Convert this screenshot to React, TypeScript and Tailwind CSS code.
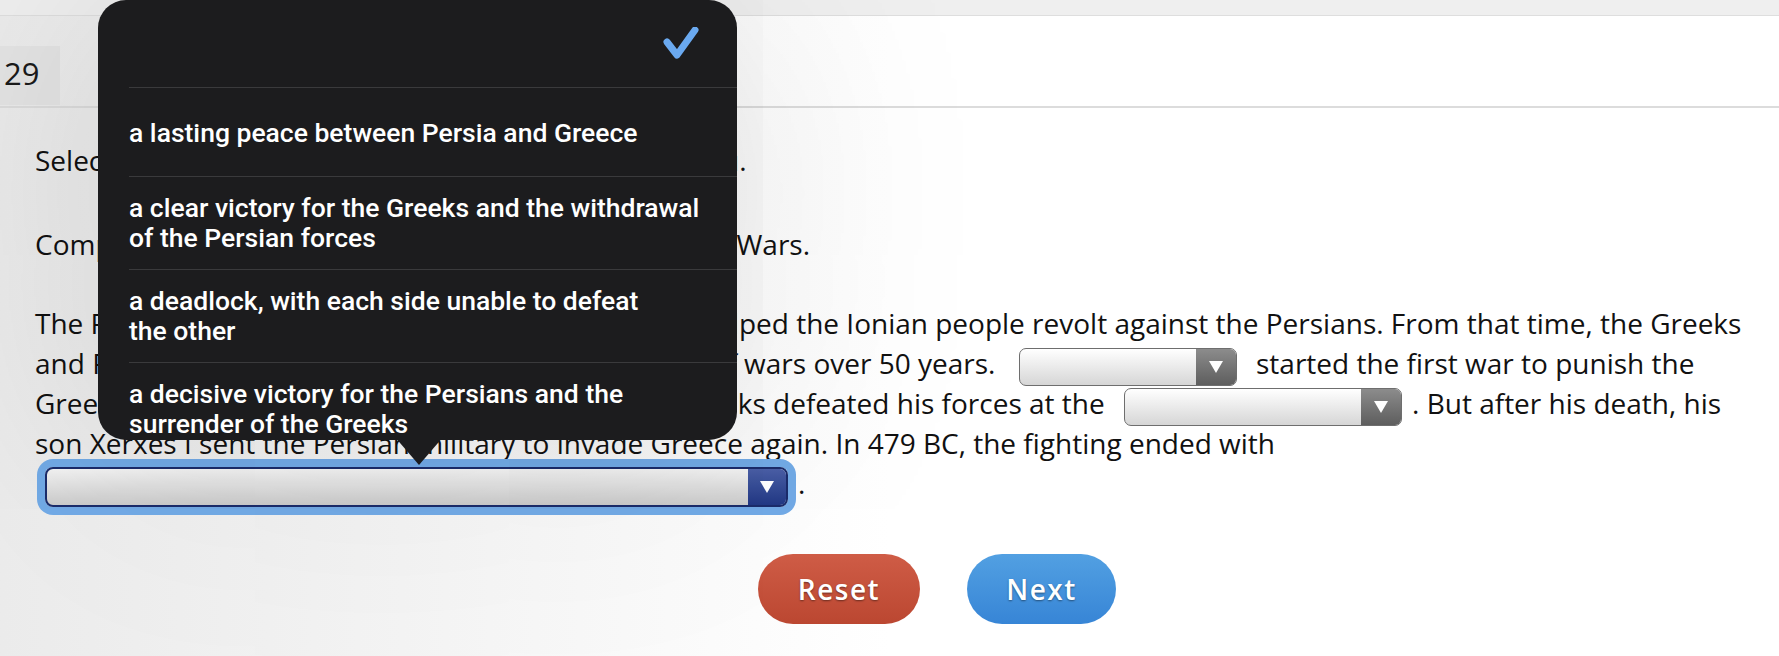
import React from "react";

const Caret = () => (
  <svg width="14" height="12" viewBox="0 0 14 12">
    <polygon points="0,0 14,0 7,12" fill="#ffffff" />
  </svg>
);

const Select = ({ width, focused }: { width: number; focused?: boolean }) => {
  if (focused) {
    return (
      <span
        className="inline-flex h-[40px] align-middle rounded-[8px] border-2 border-[#1b2c6b] bg-gradient-to-b from-[#f4f4f4] to-[#cdcdcd] shadow-[0_0_0_8px_#72aae6] overflow-hidden"
        style={{ width }}
      >
        <span className="flex-1" />
        <span className="flex w-[38px] items-center justify-center bg-gradient-to-b from-[#4a5fa6] to-[#223885]">
          <Caret />
        </span>
      </span>
    );
  }
  return (
    <span
      className="inline-flex h-[38px] align-middle rounded-[7px] border-[1.5px] border-[#6e6e6e] bg-gradient-to-b from-white to-[#d6d6d6] overflow-hidden"
      style={{ width }}
    >
      <span className="flex-1" />
      <span className="flex w-[40px] items-center justify-center bg-gradient-to-b from-[#8c8c8c] to-[#5e5e5e]">
        <Caret />
      </span>
    </span>
  );
};

const options = [
  ["a lasting peace between Persia and Greece"],
  ["a clear victory for the Greeks and the withdrawal", "of the Persian forces"],
  ["a deadlock, with each side unable to defeat", "the other"],
  ["a decisive victory for the Persians and the", "surrender of the Greeks"],
];

export default function App() {
  return (
    <div className="relative h-[656px] w-full overflow-hidden bg-gradient-to-r from-[#ebebeb] via-white to-white font-['Open_Sans',sans-serif] text-[#111]">
      <div className="h-[16px] border-b border-[#dedede] bg-[#efefef]" />

      <div className="flex h-[92px] items-end border-b-2 border-[#dcdcdc]">
        <div className="mb-[1px] flex h-[59px] w-[60px] items-center bg-[#e4e4e4] pb-[4px] pl-[4px] text-[31px] text-[#1a1a1a]">
          29
        </div>
      </div>

      <div className="pl-[35px] pt-[32px] text-[28px]">
        <div className="h-[40px] leading-[40px] whitespace-nowrap">
          Select the correct answer from each drop-down menu.
        </div>
        <div className="mt-[44px] h-[40px] leading-[40px] whitespace-nowrap">
          Complete the paragraph regarding the Greco-Persian Wars.
        </div>

        <div className="mt-[39px]">
          <div className="h-[40px] leading-[40px] whitespace-nowrap">
            The Persian Wars started in 499 BCE, when Athens helped the Ionian people revolt against the Persians. From that time, the Greeks
          </div>
          <div className="h-[40px] leading-[40px] whitespace-nowrap">
            and Persians fought against one another in a series of wars over 50 years.{" "}
            <span className="ml-[16px] mr-[12px]">
              <Select width={218} />
            </span>{" "}
            started the first war to punish the
          </div>
          <div className="h-[40px] leading-[40px] whitespace-nowrap">
            Greeks for aiding the Ionian revolt. However, the Greeks defeated his forces at the{" "}
            <span className="ml-[12px] mr-[10px]">
              <Select width={278} />
            </span>
            . But after his death, his
          </div>
          <div className="h-[40px] leading-[40px] whitespace-nowrap">
            son Xerxes I sent the Persian military to invade Greece again. In 479 BC, the fighting ended with
          </div>
          <div className="h-[40px] leading-[40px] whitespace-nowrap">
            <span className="ml-[10px] mr-[10px]">
              <Select width={743} focused />
            </span>
            .
          </div>
        </div>
      </div>

      <div className="mt-[51px] flex justify-center gap-[47px] pl-[95px]">
        <button className="h-[70px] w-[162px] rounded-full bg-gradient-to-b from-[#cf5c46] to-[#bb4731] text-[28px] font-semibold tracking-[1.5px] text-white [text-shadow:0_1px_2px_rgba(0,0,0,0.45)]">
          Reset
        </button>
        <button className="h-[70px] w-[149px] rounded-full bg-gradient-to-b from-[#52a0e2] to-[#3785d6] text-[28px] font-semibold tracking-[1.5px] text-white [text-shadow:0_1px_2px_rgba(0,0,0,0.45)]">
          Next
        </button>
      </div>

      {/* picker popover */}
      <div className="absolute left-[98px] top-0 h-[440px] w-[639px] overflow-hidden rounded-[28px] bg-[#1c1c1e] font-['Roboto',sans-serif] text-[26.5px] font-medium leading-[30px] text-white shadow-[0_0_260px_rgba(0,0,0,0.14)]">
        <div className="flex h-[87px] items-center justify-end pr-[38px]">
          <svg width="36" height="34" viewBox="0 0 36 34">
            <polyline
              points="4,15 14,28 32,3"
              fill="none"
              stroke="#6aa9f0"
              strokeWidth="7"
              strokeLinecap="round"
              strokeLinejoin="round"
            />
          </svg>
        </div>
        <div className="ml-[31px]">
          <div className="flex h-[89px] items-center border-t border-[#3a3a3c] pt-[2px]">
            {options[0][0]}
          </div>
          {options.slice(1).map((o) => (
            <div key={o[0]} className="border-t border-[#3a3a3c] py-[16px] whitespace-nowrap">
              {o[0]}
              <br />
              {o[1]}
            </div>
          ))}
        </div>
      </div>
      <svg className="absolute left-[394px] top-[436px]" width="50" height="30" viewBox="0 0 50 30">
        <polygon points="0,0 50,0 25,29" fill="#1c1c1e" />
      </svg>
    </div>
  );
}
